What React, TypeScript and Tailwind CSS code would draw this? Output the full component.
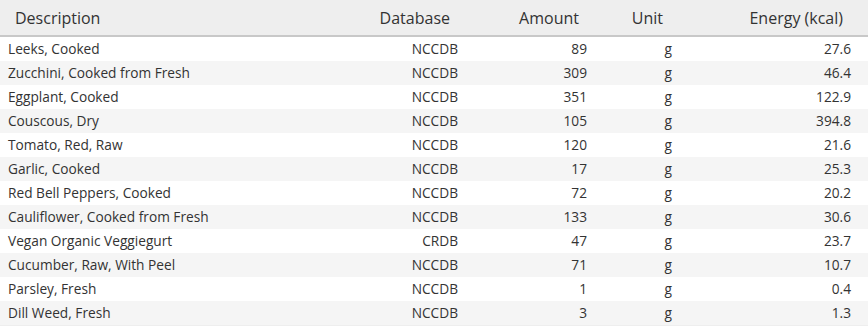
const rows: [string, string, number, string, string][] = [
  ["Leeks, Cooked", "NCCDB", 89, "g", "27.6"],
  ["Zucchini, Cooked from Fresh", "NCCDB", 309, "g", "46.4"],
  ["Eggplant, Cooked", "NCCDB", 351, "g", "122.9"],
  ["Couscous, Dry", "NCCDB", 105, "g", "394.8"],
  ["Tomato, Red, Raw", "NCCDB", 120, "g", "21.6"],
  ["Garlic, Cooked", "NCCDB", 17, "g", "25.3"],
  ["Red Bell Peppers, Cooked", "NCCDB", 72, "g", "20.2"],
  ["Cauliflower, Cooked from Fresh", "NCCDB", 133, "g", "30.6"],
  ["Vegan Organic Veggiegurt", "CRDB", 47, "g", "23.7"],
  ["Cucumber, Raw, With Peel", "NCCDB", 71, "g", "10.7"],
  ["Parsley, Fresh", "NCCDB", 1, "g", "0.4"],
  ["Dill Weed, Fresh", "NCCDB", 3, "g", "1.3"],
];

export default function App() {
  return (
    <div className="w-[868px] h-[327px] bg-white text-[#333] font-['Open_Sans',sans-serif]">
      <div className="grid grid-cols-[300px_166px_129px_85px_1fr] h-[37px] items-center bg-[#eeeeee] border-b-2 border-[#c8c8c8] text-[16px]">
        <div className="pl-[15px]">Description</div>
        <div className="text-right pr-[16px]">Database</div>
        <div className="text-right pr-[16px]">Amount</div>
        <div className="text-right pr-[17px]">Unit</div>
        <div className="text-right pr-[25px]">Energy (kcal)</div>
      </div>
      {rows.map((r, i) => (
        <div
          key={r[0]}
          className={`grid grid-cols-[300px_166px_129px_85px_1fr] h-[24px] items-center text-[13.7px] ${
            i % 2 === 1 ? "bg-[#f5f5f5]" : "bg-white"
          }`}
        >
          <div className="pl-[8px]">{r[0]}</div>
          <div className="text-right pr-[8px]">{r[1]}</div>
          <div className="text-right pr-[8px]">{r[2]}</div>
          <div className="text-right pr-[8px]">{r[3]}</div>
          <div className="text-right pr-[17px]">{r[4]}</div>
        </div>
      ))}
      <div className="h-px bg-[#eeeeee]" />
    </div>
  );
}
